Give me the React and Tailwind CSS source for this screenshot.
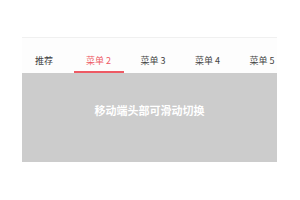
import React from "react";

const tabs = ["推荐", "菜单 2", "菜单 3", "菜单 4", "菜单 5"];

export default function App() {
  return (
    <div
      className="w-[300px] h-[200px] bg-white pt-[37px]"
      style={{ fontFamily: '"Noto Sans CJK SC", "Noto Sans", sans-serif' }}
    >
      <div className="ml-[22px] w-[255px] border-t border-[#f0f0f0] overflow-hidden">
        <div className="h-[35px] bg-[#fdfdfd] flex gap-[4.5px] ml-[-3px]">
          {tabs.map((t, i) => (
            <div
              key={t}
              className={
                i === 1
                  ? "shrink-0 w-[50px] h-full flex items-end justify-center border-b-2 border-[#ee5a64] pb-[4px] text-[9px] leading-[12px] text-[#ee5a64]"
                  : "shrink-0 w-[50px] h-full flex items-end justify-center border-b-2 border-transparent pb-[4px] text-[9px] leading-[12px] text-[#444444]"
              }
            >
              {t}
            </div>
          ))}
        </div>
        <div className="h-[89px] bg-[#cccccc] flex justify-center pt-[29px]">
          <span className="text-[11px] leading-[16px] font-bold text-white">
            移动端头部可滑动切换
          </span>
        </div>
      </div>
    </div>
  );
}
